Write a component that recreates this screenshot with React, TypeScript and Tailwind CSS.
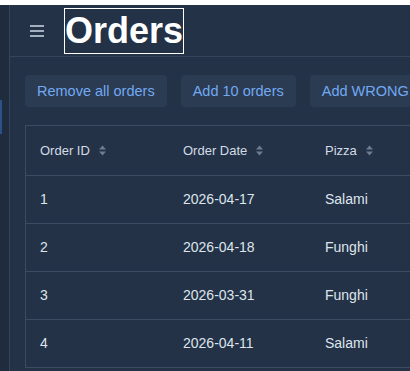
// Orders page: thin side rail, header with menu button and title, action
// buttons, and the orders table (clipped by the window on the right).

const ORDERS = [
  { id: 1, date: "2026-04-17", pizza: "Salami" },
  { id: 2, date: "2026-04-18", pizza: "Funghi" },
  { id: 3, date: "2026-03-31", pizza: "Funghi" },
  { id: 4, date: "2026-04-11", pizza: "Salami" },
];

const ACTIONS = ["Remove all orders", "Add 10 orders", "Add WRONG"];

function SortIcon() {
  return (
    <svg width="7" height="11" viewBox="0 0 7 11" className="ml-[9px] shrink-0" aria-hidden="true">
      <path d="M3.5 0.5 L7 4.5 L0 4.5 Z" fill="#6d7c91" />
      <path d="M3.5 10.5 L7 6.5 L0 6.5 Z" fill="#6d7c91" />
    </svg>
  );
}

function HeaderCell({ label }: { label: string }) {
  return (
    <div className="flex items-center pl-[14px] text-[13px] text-[#d3dbe5]">
      <span>{label}</span>
      <SortIcon />
    </div>
  );
}

export default function App() {
  return (
    <div
      className="h-[371px] w-[410px] overflow-hidden bg-white"
      style={{ fontFamily: '"Liberation Sans", Arial, sans-serif' }}
    >
      <div className="mt-[5px] flex h-[366px] bg-[#233247]">
        {/* Rail lateral */}
        <aside className="relative w-[10px] shrink-0 border-r border-[#34455b] bg-[#1f2c3e]">
          <span className="absolute left-0 top-[95px] h-[34px] w-[2px] bg-[#2d5186]" />
        </aside>

        <main className="flex min-w-0 flex-1 flex-col">
          {/* Cabeçalho */}
          <header className="flex h-[52px] shrink-0 items-center gap-[20px] border-b border-[#34455b] pl-[20px]">
            <span className="flex w-[14px] flex-col gap-[3px]" aria-hidden="true">
              <span className="h-[2px] bg-[#a3afbf]" />
              <span className="h-[2px] bg-[#a3afbf]" />
              <span className="h-[2px] bg-[#a3afbf]" />
            </span>
            <h1 className="flex h-[46px] items-center border border-white text-[36px] font-bold leading-none text-white">
              Orders
            </h1>
          </header>

          <div className="flex flex-col gap-[18px] pl-[15px] pt-[18px]">
            {/* Ações */}
            <div className="flex w-[385px] gap-[14px] overflow-hidden whitespace-nowrap">
              {ACTIONS.map((label) => (
                <button
                  key={label}
                  className="h-[32px] shrink-0 rounded-[4px] bg-[#2b3b51] px-[12px] pt-[1px] text-[14.5px] text-[#72a9f3]"
                >
                  {label}
                </button>
              ))}
            </div>

            {/* Tabela */}
            <div className="w-[520px] border-l border-t border-[#3b4b61]">
              <div className="grid h-[50px] grid-cols-[143px_142px_1fr] border-b border-[#3b4b61]">
                <HeaderCell label="Order ID" />
                <HeaderCell label="Order Date" />
                <HeaderCell label="Pizza" />
              </div>
              {ORDERS.map((o) => (
                <div
                  key={o.id}
                  className="grid h-[48px] grid-cols-[143px_142px_1fr] items-center border-b border-[#3b4b61] text-[14px] text-[#dfe5ec]"
                >
                  <span className="pl-[14px]">{o.id}</span>
                  <span className="pl-[14px]">{o.date}</span>
                  <span className="pl-[14px]">{o.pizza}</span>
                </div>
              ))}
            </div>
          </div>
        </main>
      </div>
    </div>
  );
}
